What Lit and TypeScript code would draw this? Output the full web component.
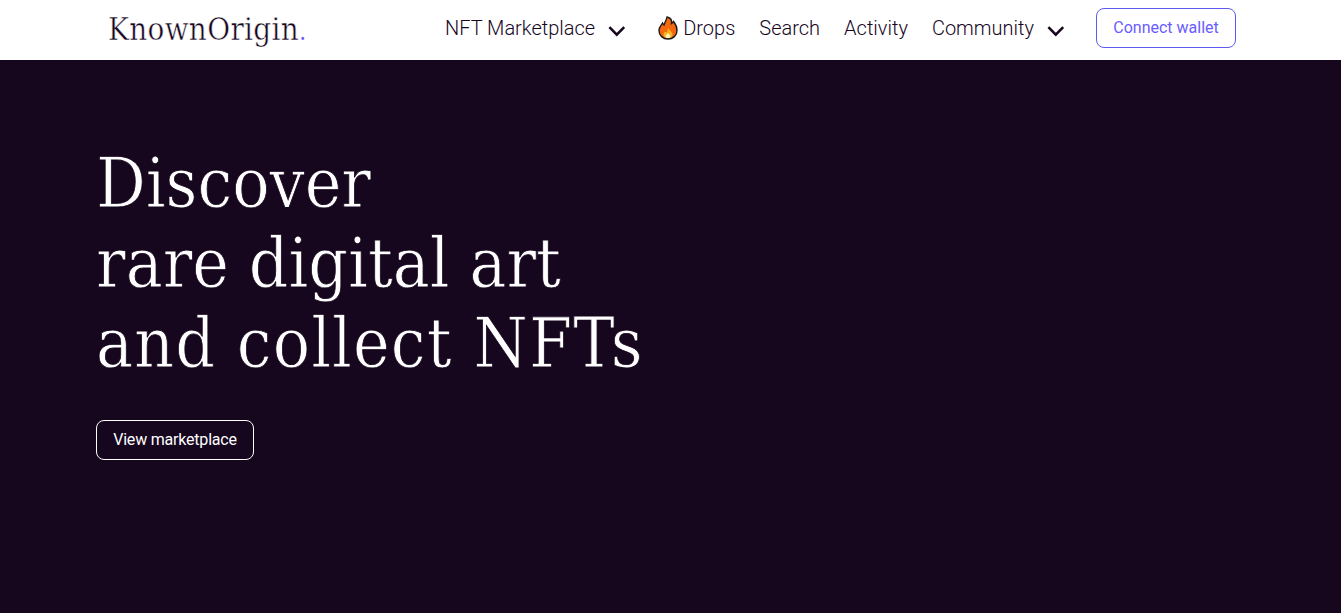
import { LitElement, css, html, svg } from 'lit';
import { customElement } from 'lit/decorators.js';

const chevron = html`<svg class="chevron" width="18" height="12" viewBox="0 0 18 12">
  <path d="M1.4 2.2 L8.8 9.6 L16.2 2.2" fill="none" stroke="#16061e" stroke-width="2.6" />
</svg>`;

const flame = svg`<svg class="flame" width="20" height="24" viewBox="0 0 20 24">
  <path d="M9 1 C13 2 14 5 13.5 7.5 C14.5 7 15 6.5 15.5 5.5 C18 8.5 19 11 19 14.5 C19 19.5 15 23 10 23 C5 23 1 19.5 1 14.5 C1 11 3 9.5 4.5 7 C5 8 5.5 8.5 6 9 C7 6 8.5 4 9 1 Z" fill="#f4690f" stroke="#1a1a1a" stroke-width="1.4" />
  <path d="M10 12 C11 14 14.5 16 14.5 18.5 C14.5 21 12.5 22 10 22 C7.5 22 5.5 21 5.5 18.5 C5.5 17 6.5 16 7.5 15.5 C8 16.5 8.5 16.5 9 16.5 C9.5 15 9.5 13.5 10 12 Z" fill="#fbb320" />
  <path d="M10 17 C11 18.5 12.5 19 12.5 20.2 C12.5 21.5 11.2 22 10 22 C8.8 22 7.5 21.5 7.5 20.2 C7.5 19 9 18.5 10 17 Z" fill="#fff3b8" />
</svg>`;

@customElement('app-root')
export class AppRoot extends LitElement {
  render() {
    return html`
      <header class="nav">
        <a class="logo">KnownOrigin<span class="dot">.</span></a>
        <nav class="links">
          <a class="link has-menu">NFT Marketplace ${chevron}</a>
          <a class="link drops">${flame} Drops</a>
          <a class="link">Search</a>
          <a class="link">Activity</a>
          <a class="link has-menu">Community ${chevron}</a>
          <button class="connect">Connect wallet</button>
        </nav>
      </header>
      <main class="hero">
        <h1>Discover<br />rare digital art<br /><span class="wide">and collect NFTs</span></h1>
        <button class="view">View marketplace</button>
      </main>
    `;
  }

  static styles = css`
    * {
      box-sizing: border-box;
    }
    :host {
      display: flex;
      flex-direction: column;
      height: 613px;
      overflow: hidden;
      background: #16061e;
      font-family: Roboto, sans-serif;
    }
    .nav {
      display: flex;
      justify-content: space-between;
      align-items: center;
      background: #fff;
      height: 60px;
      padding: 0 105px 4px 108px;
    }
    .logo {
      padding-top: 4px;
      color: #16061e;
      font-family: 'DejaVu Serif Condensed', 'DejaVu Serif', serif;
      font-size: 31px;
      font-weight: 400;
      line-height: 56px;
      letter-spacing: 0.35px;
      -webkit-text-stroke: 0.45px #fff;
    }
    .dot {
      color: #6a5cff;
      font-size: 24px;
      -webkit-text-stroke: 0;
    }
    .links {
      display: flex;
      align-items: center;
      gap: 24px;
    }
    .link {
      display: flex;
      align-items: center;
      color: #16061e;
      font-size: 20px;
      font-weight: 300;
      line-height: 24px;
      white-space: nowrap;
    }
    .chevron {
      margin-left: 13px;
      margin-top: 6px;
    }
    .flame {
      margin-right: 5px;
    }
    .drops {
      margin-left: 8px;
    }
    .connect {
      margin-left: 7px;
      width: 140px;
      height: 40px;
      padding: 0 0 2px;
      border: 1px solid #5f5af6;
      border-radius: 8px;
      background: #fff;
      color: #6a5cff;
      font-family: inherit;
      font-size: 16px;
      font-weight: 400;
    }
    .hero {
      flex: 1;
      padding: 83px 96px 0;
      color: #fff;
    }
    h1 {
      margin: 0;
      font-family: 'DejaVu Serif Condensed', 'DejaVu Serif', serif;
      font-size: 69px;
      font-weight: 400;
      line-height: 80px;
      -webkit-text-stroke: 0.8px #16061e;
    }
    .wide {
      letter-spacing: 1.1px;
    }
    .view {
      margin-top: 37px;
      width: 158px;
      height: 40px;
      padding: 0 0 2px;
      border: 1px solid #fff;
      border-radius: 8px;
      background: transparent;
      color: #fff;
      font-family: inherit;
      font-size: 16px;
      font-weight: 400;
      letter-spacing: -0.2px;
    }
  `;
}
